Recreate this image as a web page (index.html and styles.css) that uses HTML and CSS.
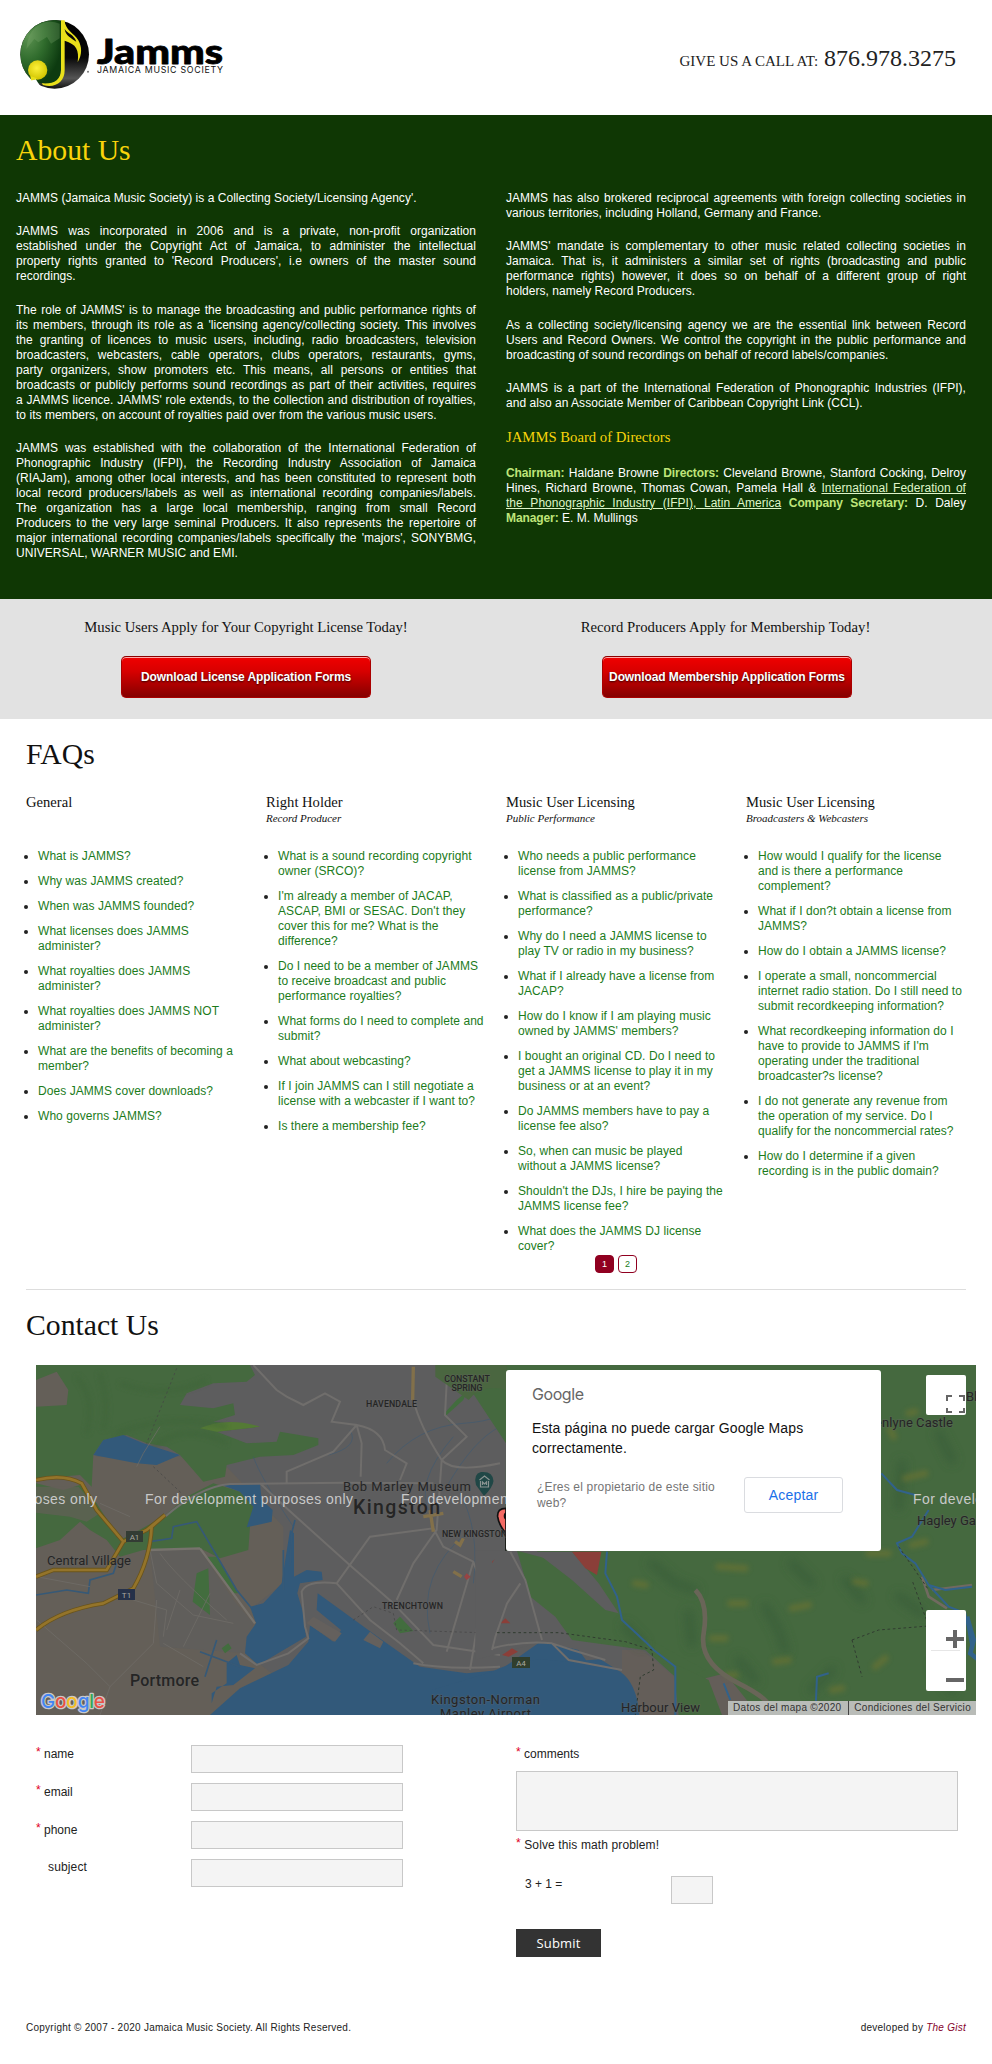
FILE: index.html
```html
<!DOCTYPE html>
<html lang="en">
<head>
<meta charset="utf-8">
<title>Jamaica Music Society</title>
<link rel="stylesheet" href="styles.css">
</head>
<body>
<header class="header">
  <svg class="logo" width="215" height="80" viewBox="15 15 215 80">
    <defs>
      <radialGradient id="ball" cx=".28" cy=".3" r=".75"><stop offset="0" stop-color="#5d9352"/><stop offset=".5" stop-color="#2f6b2c"/><stop offset="1" stop-color="#0d3b10"/></radialGradient>
      <radialGradient id="note" cx=".45" cy=".4" r=".6"><stop offset="0" stop-color="#fbf03a"/><stop offset="1" stop-color="#d2c400"/></radialGradient>
      <linearGradient id="dark" x1="0" y1="0" x2="0" y2="1"><stop offset="0" stop-color="#000"/><stop offset=".55" stop-color="#080808"/><stop offset=".85" stop-color="#555"/><stop offset="1" stop-color="#111"/></linearGradient>
      <clipPath id="disc"><circle cx="119" cy="118" r="103"/></clipPath>
    </defs>
    <g transform="translate(15 15) scale(.3333)">
      <circle cx="119" cy="118" r="103" fill="url(#dark)"/>
      <g clip-path="url(#disc)">
        <path d="M0 0H138V165Q136 204 102 206L62 204L0 180Z" fill="url(#ball)"/>
        <path d="M34 102L58 72L70 82L96 66L108 86L134 70V26Q96 10 62 36Q38 56 34 102Z" fill="#8ab37c" opacity=".25"/>
      </g>
      <path d="M46 195L62 192L76 214L60 210Z" fill="#fff"/>
      <path d="M138 16H149C149 44 178 56 190 76C201 96 202 118 188 142C193 104 184 88 149 77V166C149 201 120 221 84 210L80 205C116 208 137 196 138 165Z" fill="#e9e01a"/>
      <path d="M149 42C151 61 169 70 184 80C176 57 158 57 149 42Z" fill="#080808"/>
      <circle cx="68" cy="165" r="29" fill="url(#note)"/>
      <path d="M46 183L48 196Q60 197 66 190Z" fill="#e9e01a"/>
      <circle cx="219" cy="170" r="3" fill="#777"/>
    </g>
    <text class="logo-name" x="97" y="63.500" textLength="126" lengthAdjust="spacingAndGlyphs">Jamms</text>
    <text class="logo-tag" x="97" y="73" textLength="126">JAMAICA MUSIC SOCIETY</text>
  </svg>
  <p class="call">GIVE US A CALL AT: <span class="phone">876.978.3275</span></p>
</header>

<section class="about">
  <div class="about-col">
    <h1 class="title">About Us</h1>
    <p><span>JAMMS (Jamaica Music Society) is a Collecting Society/Licensing Agency'.</span></p>
    <p><span>JAMMS was incorporated in 2006 and is a private, non-profit organization</span> <span>established under the Copyright Act of Jamaica, to administer the intellectual</span> <span>property rights granted to 'Record Producers', i.e owners of the master sound</span> <span>recordings.</span></p>
    <p><span>The role of JAMMS' is to manage the broadcasting and public performance rights of</span> <span>its members, through its role as a 'licensing agency/collecting society. This involves</span> <span>the granting of licences to music users, including, radio broadcasters, television</span> <span>broadcasters, webcasters, cable operators, clubs operators, restaurants, gyms,</span> <span>party organizers, show promoters etc. This means, all persons or entities that</span> <span>broadcasts or publicly performs sound recordings as part of their activities, requires</span> <span>a JAMMS licence. JAMMS' role extends, to the collection and distribution of royalties,</span> <span>to its members, on account of royalties paid over from the various music users.</span></p>
    <p><span>JAMMS was established with the collaboration of the International Federation of</span> <span>Phonographic Industry (IFPI), the Recording Industry Association of Jamaica</span> <span>(RIAJam), among other local interests, and has been constituted to represent both</span> <span>local record producers/labels as well as international recording companies/labels.</span> <span>The organization has a large local membership, ranging from small Record</span> <span>Producers to the very large seminal Producers. It also represents the repertoire of</span> <span>major international recording companies/labels specifically the 'majors', SONYBMG,</span> <span>UNIVERSAL, WARNER MUSIC and EMI.</span></p>
  </div>
  <div class="about-col about-right">
    <p><span>JAMMS has also brokered reciprocal agreements with foreign collecting societies in</span> <span>various territories, including Holland, Germany and France.</span></p>
    <p><span>JAMMS' mandate is complementary to other music related collecting societies in</span> <span>Jamaica. That is, it administers a similar set of rights (broadcasting and public</span> <span>performance rights) however, it does so on behalf of a different group of right</span> <span>holders, namely Record Producers.</span></p>
    <p><span>As a collecting society/licensing agency we are the essential link between Record</span> <span>Users and Record Owners. We control the copyright in the public performance and</span> <span>broadcasting of sound recordings on behalf of record labels/companies.</span></p>
    <p><span>JAMMS is a part of the International Federation of Phonographic Industries (IFPI),</span> <span>and also an Associate Member of Caribbean Copyright Link (CCL).</span></p>
    <h2 class="board">JAMMS Board of Directors</h2>
    <p><span><b>Chairman:</b> Haldane Browne <b>Directors:</b> Cleveland Browne, Stanford Cocking, Delroy</span> <span>Hines, Richard Browne, Thomas Cowan, Pamela Hall &amp; <a class="ifpi">International Federation of</a></span> <span><a class="ifpi">the Phonographic Industry (IFPI), Latin America</a> <b>Company Secretary:</b> D. Daley</span> <span><b>Manager:</b> E. M. Mullings</span></p>
  </div>
</section>

<section class="apply">
  <div class="apply-item"><h2 class="apply-title">Music Users Apply for Your Copyright License Today!</h2><a class="download">Download License Application Forms</a></div>
  <div class="apply-item"><h2 class="apply-title">Record Producers Apply for Membership Today!</h2><a class="download">Download Membership Application Forms</a></div>
</section>

<section class="faqs">
  <h1 class="title">FAQs</h1>
  <div class="faq-grid">
    <div class="faq-col">
      <h3 class="faq-head">General</h3>
      <ul class="faq-list"><li>What is JAMMS?</li><li>Why was JAMMS created?</li><li>When was JAMMS founded?</li><li>What licenses does JAMMS administer?</li><li>What royalties does JAMMS administer?</li><li>What royalties does JAMMS NOT administer?</li><li>What are the benefits of becoming a member?</li><li>Does JAMMS cover downloads?</li><li>Who governs JAMMS?</li></ul>
    </div>
    <div class="faq-col">
      <h3 class="faq-head">Right Holder<small>Record Producer</small></h3>
      <ul class="faq-list"><li>What is a sound recording copyright owner (SRCO)?</li><li>I'm already a member of JACAP, ASCAP, BMI or SESAC. Don't they cover this for me? What is the difference?</li><li>Do I need to be a member of JAMMS to receive broadcast and public performance royalties?</li><li>What forms do I need to complete and submit?</li><li>What about webcasting?</li><li>If I join JAMMS can I still negotiate a license with a webcaster if I want to?</li><li>Is there a membership fee?</li></ul>
    </div>
    <div class="faq-col">
      <h3 class="faq-head">Music User Licensing<small>Public Performance</small></h3>
      <ul class="faq-list"><li>Who needs a public performance license from JAMMS?</li><li>What is classified as a public/private performance?</li><li>Why do I need a JAMMS license to play TV or radio in my business?</li><li>What if I already have a license from JACAP?</li><li>How do I know if I am playing music owned by JAMMS' members?</li><li>I bought an original CD. Do I need to get a JAMMS license to play it in my business or at an event?</li><li>Do JAMMS members have to pay a license fee also?</li><li>So, when can music be played<br>without a JAMMS license?</li><li>Shouldn't the DJs, I hire be paying the JAMMS license fee?</li><li>What does the JAMMS DJ license cover?</li></ul>
      <div class="pager"><span class="page page-on">1</span><span class="page">2</span></div>
    </div>
    <div class="faq-col">
      <h3 class="faq-head">Music User Licensing<small>Broadcasters &amp; Webcasters</small></h3>
      <ul class="faq-list"><li>How would I qualify for the license<br>and is there a performance<br>complement?</li><li>What if I don?t obtain a license from JAMMS?</li><li>How do I obtain a JAMMS license?</li><li>I operate a small, noncommercial internet radio station. Do I still need to submit recordkeeping information?</li><li>What recordkeeping information do I have to provide to JAMMS if I'm operating under the traditional broadcaster?s license?</li><li>I do not generate any revenue from<br>the operation of my service. Do I<br>qualify for the noncommercial rates?</li><li>How do I determine if a given<br>recording is in the public domain?</li></ul>
    </div>
  </div>
</section>

<section class="contact">
  <h1 class="title">Contact Us</h1>
  <div class="map">
    <svg class="map-art" width="940" height="350" viewBox="0 0 940 350">
      <defs>
        <filter id="soft" x="-20%" y="-20%" width="140%" height="140%"><feGaussianBlur stdDeviation="15"/></filter>
        <filter id="softer" x="-20%" y="-20%" width="140%" height="140%"><feGaussianBlur stdDeviation="8"/></filter>
      </defs>
      <rect width="940" height="350" fill="#5d5d5e"/>
      <g transform="scale(.33333) translate(-108 -195)">
        <!-- western plains -->
        <path d="M108 195H230L290 470L560 470L680 500L850 680L850 850L760 920L770 1000L735 1060L830 1130L640 1245H108Z" fill="#645f58"/>
        <path d="M450 750H600L700 900L760 970L740 1060L480 1040Z" fill="#605e5b"/>
        <!-- green hills -->
        <path d="M108 195H750L765 225L740 245L640 250L560 280L540 315L640 325L700 310L705 345L640 365L780 380L650 395L740 430L830 425L840 395L955 415V435L880 465L780 470L680 495L675 530L610 545L575 505L540 465L500 440L440 430L380 405L310 420L280 465L275 560L240 525L180 530L108 545V320L200 315L205 270L170 215L108 240Z" fill="#45693f"/>
        <path d="M108 550L190 570L240 555L290 610L360 720L400 700L490 650L560 590L640 550L720 575L760 620L750 680L745 750L660 775L600 745L430 750L360 770L320 720L270 690L240 665L180 720L108 745Z" fill="#45693f"/>
        <path d="M108 560H235L270 600L300 640L260 665L210 650L108 638Z" fill="#645f58" opacity=".7"/>
        <path d="M600 385Q680 350 780 380L650 395Z" fill="#547a35"/>
        <path d="M590 820L625 805L630 945L578 905ZM1180 970L1200 950L1240 993L1200 1000ZM1333 340L1350 370L1340 345L1390 300L1400 275L1370 300ZM665 1045L685 1030L695 1045L675 1060ZM620 770L650 770L715 880L700 880Z" fill="#426d3e"/>
        <path d="M230 230Q290 300 260 400M300 220Q330 320 310 390M360 250Q500 300 620 240M350 400Q500 340 680 380M450 450Q550 360 680 430" fill="none" stroke="#3d6338" stroke-width="12" opacity=".6" filter="url(#softer)"/>
        <!-- water -->
        <g fill="#32597a">
          <path d="M280 465L310 420L370 405L430 430L540 465L470 495L410 490Z"/>
          <path d="M665 555L780 552L785 600L818 630L815 665L740 682L760 620L720 575Z"/>
          <path d="M870 690L882 700L882 830L920 810L965 815L968 840L900 850L892 880L910 940L918 1010L775 1095L735 1060L740 1010L768 970L750 920L790 910L845 850Z"/>
          <path d="M630 1245L720 1165L865 1095L925 1025L930 975L1000 1025L1023 990L950 930L953 880L1105 990L1160 1030L1260 1100L1400 1120L1500 1110L1700 970L1770 975L1840 1040L1870 1120L1890 1245Z"/>
          <path d="M680 1090L710 1065L720 1095L765 1105L700 1155L650 1160L635 1210V1180L680 1150Z"/>
        </g>
        <path d="M920 970L940 950L1025 1000L1005 1025ZM1090 1020L1110 995L1150 1025L1140 1045Z" fill="#64605d"/>
        <g fill="none" stroke="#365977" stroke-width="5">
          <path d="M450 725L515 715L520 680L590 665L640 750L710 870L755 925M870 800L875 700L885 660M108 885L200 870L265 880L270 840L340 820L350 790M600 1055L720 1100M650 1020L615 1130M850 750V870" />
          <path stroke-width="2" opacity=".75" d="M985 465Q1080 440 1050 390M760 470Q780 530 880 680M1160 490Q1250 380 1390 370T1500 310M1290 640Q1240 550 1360 410M1340 560Q1420 420 1500 380M1420 850Q1440 690 1380 580M1290 1000Q1250 820 1400 700"/>
        </g>
        <!-- minor roads -->
        <g fill="none" stroke="#706e6c" stroke-width="6">
          <path d="M760 195L830 270L860 290L910 315L975 280L1020 305L995 365L1070 375L1085 430L1082 530M1070 375L1000 455L860 515V550M1070 375Q1150 390 1155 450L1220 490L1200 540M495 650Q600 560 690 552L1030 548L1300 550M780 550L860 625L1055 800L1175 905L1300 1035L1500 1065M1240 300Q1260 380 1325 480L1400 410L1335 345L1340 250L1410 195M1325 480L1310 690L1240 790L1190 900M1325 480Q1360 520 1500 490M1010 850L1110 710L1300 685L1330 740L1420 785L1450 870L1410 1110M1420 785L1340 1055M1240 1090Q1340 1110 1500 1100M1010 850Q920 840 905 875L915 980L925 1015L865 1060L770 1095L720 1060M1010 850L1110 960L1200 1030L1270 1090"/>
        </g>
        <g fill="none" stroke="#716e69" stroke-width="3" opacity=".7">
          <path d="M450 750L470 850L580 945L700 970M480 760Q520 820 680 960M400 900L500 930L490 1010M110 960L260 1090L330 1160L300 1245M330 1160L460 1030L470 900M490 1030L610 1100M540 870L500 990M630 880L550 1040M410 500L430 460L480 380M300 610L390 650M110 830L270 860"/>
          <path d="M530 205L440 430M460 500L545 580M1060 960L1120 920L1180 940L1190 990L1500 1000" stroke="#444" stroke-dasharray="7 8"/>
        </g>
        <!-- highways -->
        <path d="M600 745L445 750M600 745Q640 800 765 970" fill="none" stroke="#77736d" stroke-width="7"/>
        <path d="M108 540Q190 520 245 550L290 630L370 725L320 810L160 810L108 830M108 990Q180 930 310 910L400 865Q450 780 455 680L495 645M370 725L440 690L495 645" fill="none" stroke="#6a541b" stroke-width="13"/>
        <path d="M108 540Q190 520 245 550L290 630L370 725L320 810L160 810L108 830M108 990Q180 930 310 910L400 865Q450 780 455 680L495 645M370 725L440 690L495 645" fill="none" stroke="#94742a" stroke-width="8"/>
        <path d="M1240 200L1238 300M1270 650L1330 640M1290 630L1300 695M1365 725L1380 735L1390 715M1360 815L1385 830" fill="none" stroke="#82704a" stroke-width="10"/>
        <path d="M1460 790L1470 770L1480 785ZM1392 830L1400 820L1412 830L1400 840Z" fill="#974444"/>
      </g>
      <g transform="scale(.33333) translate(1368 -45)">
        <path d="M40 602L130 600L330 760L420 850L600 990L720 1095H1460V45H-160L-90 80L42 280Z" fill="#45693f"/>
        <path d="M-170 45H45V120Q-30 100 -70 150L-170 80Z" fill="#4a6640"/>
        <path d="M-50 602H75L120 690L200 790L400 850L570 990L680 1040L740 1095H400L260 900L150 875L-50 930Z" fill="#5d5d5e"/>
        <path d="M75 602L180 630L330 740L420 840L640 960L560 990L460 900L240 870L190 800L115 740Z" fill="#45693f"/>
        <path d="M130 605H240L320 700L380 790L340 780L240 690Z" fill="#5d5d5e"/>
        <path d="M390 900L450 900L560 990L545 1095H440L390 970Z" fill="#645e59"/>
        <path d="M640 985L700 970L800 1095H680Z" fill="#645e59"/>
        <path d="M460 900L650 990L690 1095H560L545 960Z" fill="#45693f"/>
        <g filter="url(#soft)" fill="none" stroke="#355a37" stroke-width="26" stroke-linecap="round" opacity=".6">
          <path d="M480 640l70 60 60 20M820 770l40 70 20 60M590 790l10 90M1060 690l50 60M1220 740l70 50M740 930l50 60M1220 470l10-130M960 1020l60-60M1340 250l40 80M400 830l50 50M1330 950l50 70M900 640l60 60"/>
        </g>
        <g filter="url(#softer)" fill="none" stroke="#6f7430" stroke-width="20" stroke-linecap="round" opacity=".6">
          <path d="M680 650l80 5M715 760l45 0M900 775l50-10M430 700l30 5M1130 610l60 0M1240 385l60-15M1260 585l40-10M1090 695l30 5M660 865l40 0M850 935l40-5M1150 950l30-25M1020 1020l30-5M1250 190l20-5M1195 240l10 20M710 975l20 0"/>
        </g>
        <path d="M0 965Q100 915 220 935L325 928L385 965Q435 1000 442 1095H-180V1020Z" fill="#32597a"/>
        <path d="M240 605H328L315 675L280 655ZM25 820L40 805L55 820ZM30 915L60 895L78 905L50 920ZM0 635L8 628L0 640Z" fill="#8b3f39"/>
        <g fill="none" stroke="#706e6c" stroke-width="6">
          <path d="M55 605L100 690L150 870M85 700L45 760L10 860L0 900M0 895Q100 870 180 880L230 930L390 960M180 880L240 900L340 930" />
          <path d="M610 720Q650 760 635 850T740 1000T830 1095" stroke="#696558" stroke-width="14"/>
          <path d="M1290 680L1310 740L1365 775M1320 720L1440 705" stroke="#716a60" stroke-width="8"/>
        </g>
        <g fill="none" stroke="#31628b" stroke-width="6">
          <path d="M345 605L340 670L375 740L390 810L460 875L485 900L550 950V1095M1168 370L1215 420L1270 435M1310 480L1260 560L1215 580L1230 610L1270 640L1310 705L1360 720L1440 710M1310 705L1370 770L1420 790L1440 900M695 1000L715 1050M970 1095L975 980L1010 970" />
          <path d="M1425 800L1445 870L1435 910L1460 930" stroke-width="14"/>
        </g>
        <path d="M15 848H200L400 875L480 900L485 960L445 980L430 1095M1220 590L1310 720M1080 870L1160 840L1310 828L1260 690M1080 870L1110 980" fill="none" stroke="#303b30" stroke-width="3" stroke-dasharray="8 8"/>
        <path d="M42 602V475Q15 475 17 500Q20 525 42 550Z" fill="#f46a64" stroke="#111" stroke-width="5"/>
        <circle cx="47" cy="498" r="12" fill="#111"/>
      </g>
      <g class="map-labels">
        <text x="431" y="16.500" class="area" text-anchor="middle">CONSTANT</text><text x="431" y="25.500" class="area" text-anchor="middle">SPRING</text>
        <text x="330" y="42" class="area" textLength="51">HAVENDALE</text>
        <text x="406" y="172" class="area" textLength="65">NEW KINGSTON</text>
        <text x="346" y="244" class="area" textLength="61">TRENCHTOWN</text>
        <text x="307" y="126" class="place" textLength="128">Bob Marley Museum</text>
        <text x="11" y="200" class="place" textLength="84">Central Village</text>
        <text x="395" y="339" class="place" textLength="109">Kingston-Norman</text>
        <text x="404" y="353" class="place" textLength="91">Manley Airport</text>
        <text x="585" y="347" class="place" textLength="79">Harbour View</text>
        <text x="839" y="62" class="place" textLength="78">enlyne Castle</text>
        <text x="881" y="160" class="place">Hagley Gap</text><text x="930" y="36" class="place">Bl</text>
        <text x="317" y="149" class="city" textLength="87">Kingston</text>
        <text x="94" y="321" class="town" textLength="69">Portmore</text>
      </g>
      <path d="M448 131L440 120Q437 109 445 107Q457 106 457.500 116Q457 122 448 131Z" fill="#204746"/>
      <path d="M443.500 115L448.500 111L453.500 115M444.500 116V122H452.500V116M446.500 120V117L448.500 119L450.500 117V120" fill="none" stroke="#8a9492" stroke-width="1.200"/>
      <g class="shield"><rect x="90" y="166" width="17" height="11" fill="#333c34"/><text x="98.500" y="175" text-anchor="middle">A1</text><rect x="82" y="224" width="17" height="11" fill="#263149"/><text x="90.500" y="233" text-anchor="middle">T1</text><rect x="476" y="292" width="18" height="11" fill="#303e2d"/><text x="485" y="301" text-anchor="middle">A4</text></g>
      <g class="watermark"><text x="-147" y="138.500" textLength="208">For development purposes only</text><text x="109" y="138.500" textLength="208">For development purposes only</text><text x="365" y="138.500" textLength="208">For development purposes only</text><text x="877" y="138.500" textLength="208">For development purposes only</text></g>
      <text class="glogo" x="5" y="343" textLength="64"><tspan fill="#4285f4">G</tspan><tspan fill="#ea5143">o</tspan><tspan fill="#f5bc25">o</tspan><tspan fill="#4285f4">g</tspan><tspan fill="#34a853">l</tspan><tspan fill="#ea5143">e</tspan></text>
    </svg>
    <div class="dialog">
      <svg class="dialog-logo" width="54" height="24" viewBox="0 0 54 24"><text x="0" y="17.500" textLength="52">Google</text></svg>
      <p class="dialog-msg">Esta página no puede cargar Google Maps correctamente.</p>
      <div class="dialog-row"><span class="owner">¿Eres el propietario de este sitio web?</span><span class="accept">Aceptar</span></div>
    </div>
    <svg class="control full" width="40" height="40"><path d="M21 26V21H26M33 21H38V26M38 33V37H33M26 37H21V33" fill="none" stroke="#666" stroke-width="2"/></svg>
    <svg class="control zoom" width="40" height="81"><path d="M20 29H38M29 20V38M20 70H38" stroke="#666" stroke-width="4"/><path d="M5 40.500H34" stroke="#e6e6e6"/></svg>
    <div class="terms"><span>Datos del mapa ©2020</span><span>Condiciones del Servicio</span></div>
  </div>
  <form class="form">
    <div class="form-left">
      <div class="row"><label><i>*</i> name</label><input type="text"></div>
      <div class="row"><label><i>*</i> email</label><input type="text"></div>
      <div class="row"><label><i>*</i> phone</label><input type="text"></div>
      <div class="row"><label class="optional">subject</label><input type="text"></div>
    </div>
    <div class="form-right">
      <label><i>*</i> comments</label>
      <textarea></textarea>
      <label class="solve"><i>*</i> Solve this math problem!</label>
      <div class="math"><span>3 + 1 =</span><input type="text"></div>
      <button class="submit" type="button">Submit</button>
    </div>
  </form>
</section>
<footer class="footer"><span>Copyright © 2007 - 2020 Jamaica Music Society. All Rights Reserved.</span><span>developed by <em>The Gist</em></span></footer>
</body>
</html>
```

FILE: styles.css
```css
* { box-sizing: border-box; }
body { margin: 0; background: #fff; color: #222; font: 12px/15px "Liberation Sans", Arial, sans-serif; }
h1, h2, h3, p, ul { margin: 0; padding: 0; font-weight: normal; }
.title, .board, .apply-title, .faq-head, .call { font-family: "Liberation Serif", "Times New Roman", serif; }
.title { font-size: 29.700px; line-height: 36px; color: #111; }

.header { height: 115px; padding: 15px 36px 0 15px; display: flex; justify-content: space-between; }
.logo-name { font: 900 35px Lato, sans-serif; fill: #000; stroke: #000; stroke-width: .8; stroke-linejoin: round; }
.logo-tag { font: 400 8.800px Inter, sans-serif; fill: #111; }
.call { font-size: 15px; line-height: 30px; padding-top: 28px; }
.phone { font-size: 24px; margin-left: 2px; }

.about { height: 484px; background: #0f3704; color: #fff; padding: 17px 26px 0 16px; display: grid; grid-template-columns: 460px 460px; column-gap: 30px; }
.about .title { color: #f9d40b; margin-bottom: 23px; }
.about p { margin-bottom: 18.3px; letter-spacing: .03px; }
.about p span { display: block; text-align: justify; text-align-last: justify; }
.about p span:last-child { text-align-last: left; }
.about-right { padding-top: 59px; }
.about b { color: #bfe57a; letter-spacing: -.1px; }
.board { color: #f9d40b; font-size: 14.700px; line-height: 18px; margin: -1px 0 19.500px; }
.ifpi { color: #dff5c8; text-decoration: underline; }

.apply { height: 120px; background: #e2e2e2; padding: 19px 26px 0 4px; display: grid; grid-template-columns: 484px 478px; }
.apply-item { display: flex; flex-direction: column; align-items: center; gap: 20px; }
.apply-title { font-size: 14.700px; line-height: 18px; color: #111; }
.apply-item:last-child .apply-title { letter-spacing: .04px; padding-right: 3px; }
.download { width: 250px; height: 42px; border: 1px solid #a00; border-top-color: #8c0000; border-radius: 5px; background: linear-gradient(#f00000, #d80000 35%, #850000); box-shadow: inset 0 1px 0 #ffaaaa; color: #fff; font-weight: bold; line-height: 41px; letter-spacing: -.1px; text-align: center; white-space: nowrap; text-shadow: 0 1px 2px #300; }

.faqs { padding: 17px 0 0; margin: 0 26px; height: 571px; border-bottom: 1px solid #ddd; }
.faq-grid { display: grid; grid-template-columns: repeat(4, 240px); margin-top: 21px; }
.faq-head { height: 56px; font-size: 14.600px; line-height: 18px; color: #111; }
.faq-head small { display: block; font: italic 11px/14px "Liberation Serif", serif; }
.faq-list { width: 224px; padding-left: 12px; color: #222; letter-spacing: .06px; }
.faq-list li { margin-bottom: 10px; color: #1b7b1b; }
.faq-list li::marker { color: #222; }
.pager { display: flex; gap: 4px; margin: -9px 0 0 89px; }
.page { width: 19px; height: 18px; border: 1px solid #900020; border-radius: 4px; font-size: 9px; line-height: 16px; text-align: center; color: #1b7b1b; }
.page-on { background: #900020; color: #fff; }

.contact .title { margin: 17px 26px 22px; }
.map { position: relative; width: 940px; height: 350px; margin-left: 36px; overflow: hidden; }
.map-art { display: block; }
.map-labels { font-family: Roboto, sans-serif; fill: #252525; paint-order: stroke; stroke: #65656560; stroke-width: 1.500px; }
.area { font-size: 8.800px; font-weight: 500; }
.place { font-size: 13px; }
.city { font-size: 19.500px; font-weight: 500; }
.town { font-size: 16px; font-weight: 500; }
.shield { font: 8px Roboto, sans-serif; fill: #a8a8a0; }
.watermark { font: 14px "Liberation Sans", sans-serif; fill: #c9c9c9; }
.glogo { font: 500 19px Inter, sans-serif; stroke: #c8c8c8; stroke-width: 2.500px; stroke-linejoin: round; paint-order: stroke; }
.dialog { position: absolute; left: 470px; top: 5px; width: 375px; height: 181px; border-radius: 3px; background: #fff; padding: 12px 38px 0 26px; }
.dialog-logo { display: block; font: 16px Inter, sans-serif; fill: #666; }
.dialog-msg { color: #111; font-size: 14px; line-height: 20px; letter-spacing: .11px; padding-top: 12px; width: 290px; }
.dialog-row { display: flex; justify-content: space-between; align-items: flex-start; padding: 19px 0 0 5px; }
.owner { color: #757575; font-size: 12px; line-height: 16px; letter-spacing: .17px; width: 190px; padding-top: 2px; }
.accept { width: 99px; height: 36px; border: 1px solid #dadce0; border-radius: 3px; color: #1a6fe8; font-size: 14px; line-height: 34px; text-align: center; letter-spacing: .2px; }
.control { position: absolute; right: 10px; background: #fff; border-radius: 2px; }
.full { top: 10px; }
.zoom { bottom: 24px; }
.terms { position: absolute; right: 0; bottom: 0; width: 248px; height: 14px; display: flex; justify-content: space-between; background: #b9bcb8; color: #333; font-size: 10px; letter-spacing: .3px; line-height: 14px; white-space: nowrap; }
.terms span { padding: 0 5px; }
.terms span + span { border-left: 1px solid #444; }

.form { padding: 30px 0 0 36px; display: grid; grid-template-columns: 480px 442px; height: 276px; }
.row { display: grid; grid-template-columns: 155px 212px; height: 38px; }
label { display: block; padding-top: 2px; }
label i { color: #e0001b; font-style: normal; position: relative; top: -2px; }
.optional { padding-left: 12px; padding-top: 1px; letter-spacing: .15px; }
input, textarea { display: block; width: 100%; height: 28px; margin: 0; border: 1px solid #c8c8c8; border-radius: 0; background: #f4f4f4; resize: none; }
textarea { height: 60px; margin-top: 9px; }
.solve { margin-top: 5px; letter-spacing: .12px; }
.math { display: flex; padding: 23px 0 25px 9px; }
.math span { width: 146px; padding-top: 1px; }
.math input { width: 42px; }
.submit { display: block; width: 85px; height: 28px; padding: 0; border: 0; background: #333; color: #fff; font: 13px "Open Sans", sans-serif; letter-spacing: .2px; }
.footer { display: flex; justify-content: space-between; padding: 29px 26px 0; font-size: 10px; letter-spacing: .25px; color: #222; }
.footer em { color: #85002a; }
```
